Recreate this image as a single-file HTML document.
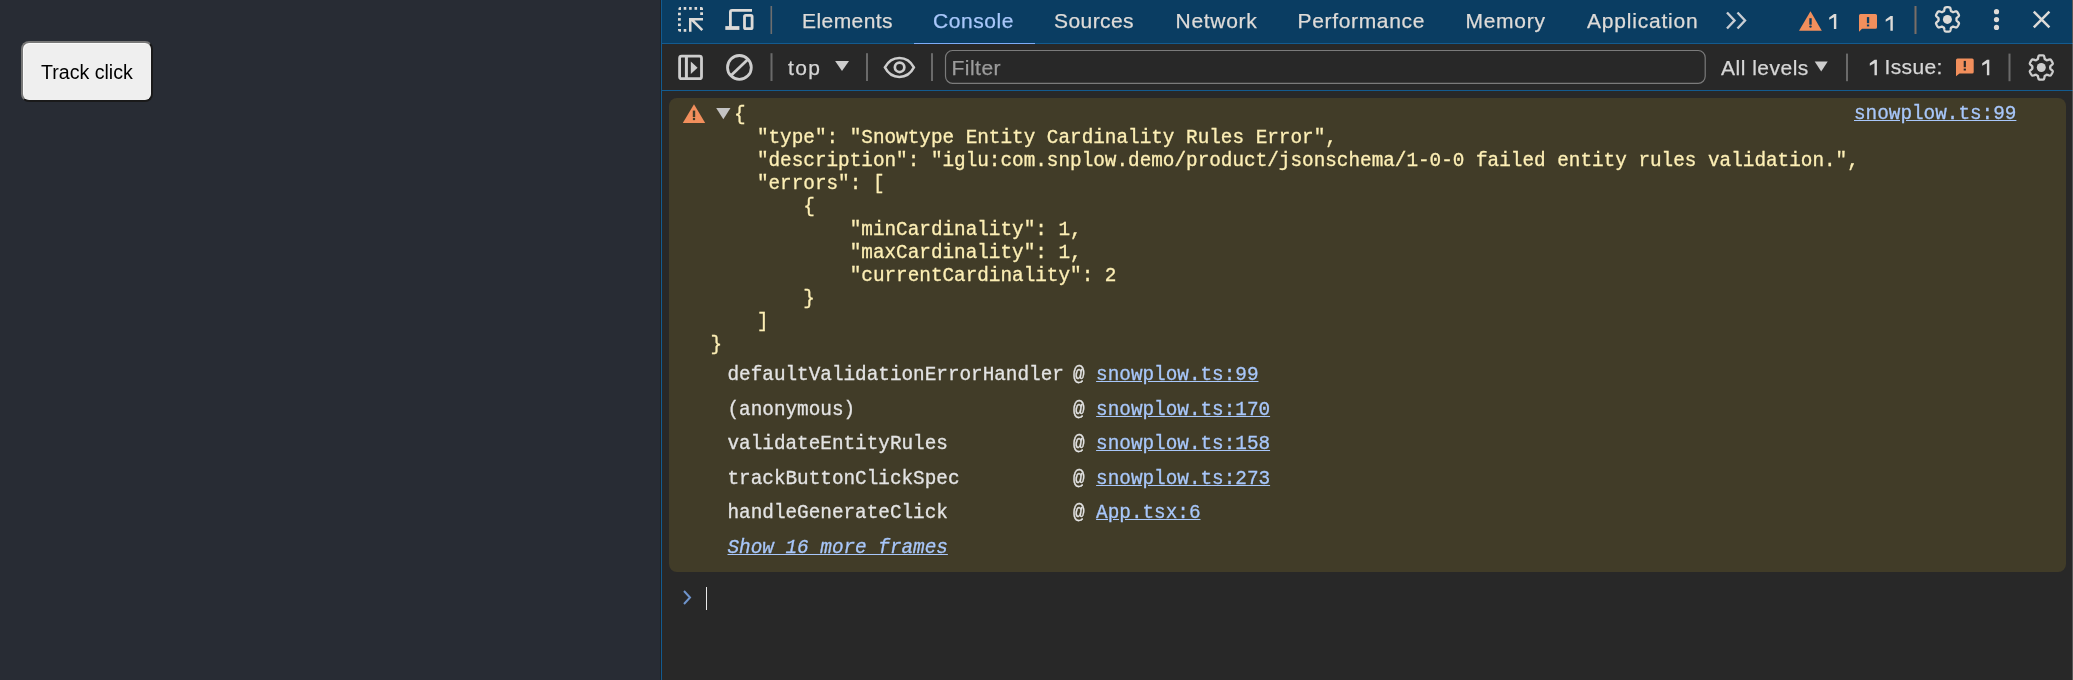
<!DOCTYPE html>
<html><head><meta charset="utf-8">
<style>
html,body{margin:0;padding:0;}
body{will-change:transform;width:2073px;height:680px;position:relative;overflow:hidden;background:#282c34;font-family:"Liberation Sans",sans-serif;}
.a{position:absolute;}
#btn{left:21px;top:41px;box-sizing:border-box;width:132px;height:61px;background:#efefef;border:2px solid #787878;border-right-color:#1a1a1a;border-bottom-color:#1a1a1a;border-radius:8px;box-shadow:inset 1px 1px 0 #fafafa;}
#btntxt{left:41px;top:60px;font-size:19.6px;color:#000;white-space:nowrap;line-height:24px;}
#dt{left:660px;top:0;width:1413px;height:680px;background:#282828;}
#tabbar{left:662px;top:0;width:1410px;height:43px;background:#0a3d62;}
.bl{background:#135b90;}
.tab{-webkit-text-stroke:0.25px currentColor;top:8px;font-size:21px;line-height:26px;color:#dedbd8;white-space:nowrap;}
.sep{width:2px;background:#6a6a6a;}
.tb{-webkit-text-stroke:0.25px currentColor;font-size:21px;line-height:26px;color:#e3e3e3;white-space:nowrap;}
.mono{-webkit-text-stroke:0.3px currentColor;font-family:"Liberation Mono",monospace;font-size:19.34px;white-space:pre;line-height:23px;}
.w{color:#fdefb5;}
.s{color:#e3e3e3;}
.lk{color:#a8c7fa;text-decoration:underline;text-underline-offset:1px;}
</style></head><body>
<div class="a" id="btn"></div>
<div class="a" id="btntxt">Track click</div>

<div class="a" id="dt"></div>
<div class="a" style="left:660px;top:0;width:1px;height:680px;background:#1f2226"></div>
<div class="a bl" style="left:661px;top:0;width:1px;height:680px"></div>

<div class="a" id="tabbar"></div>
<div class="a bl" style="left:661px;top:43px;width:1412px;height:1px"></div>
<div class="a bl" style="left:661px;top:90px;width:1412px;height:1px"></div>

<!-- tabs -->
<div class="a tab" style="left:802px;letter-spacing:0.43px">Elements</div>
<div class="a tab" style="left:933px;color:#a8c7fa;letter-spacing:0.58px">Console</div>
<div class="a" style="left:914px;top:43px;width:121px;height:1px;background:#7cacf8"></div>
<div class="a tab" style="left:1054px;letter-spacing:0.42px">Sources</div>
<div class="a tab" style="left:1175.5px;letter-spacing:0.72px">Network</div>
<div class="a tab" style="left:1297.5px;letter-spacing:0.66px">Performance</div>
<div class="a tab" style="left:1465.5px;letter-spacing:0.72px">Memory</div>
<div class="a tab" style="left:1587px;letter-spacing:0.8px">Application</div>

<!-- console message -->
<div class="a" style="left:669px;top:98px;width:1397px;height:474px;background:#413c28;border-radius:8px"></div>
<div class="a mono w" style="left:734px;top:104px">{</div>
<div class="a mono w" style="left:710.5px;top:127px">    "type": "Snowtype Entity Cardinality Rules Error",
    "description": "iglu:com.snplow.demo/product/jsonschema/1-0-0 failed entity rules validation.",
    "errors": [
        {
            "minCardinality": 1,
            "maxCardinality": 1,
            "currentCardinality": 2
        }
    ]
}</div>

<!-- stack -->
<div class="a mono s" style="left:727.5px;top:358px;line-height:34.5px">defaultValidationErrorHandler
(anonymous)
validateEntityRules
trackButtonClickSpec
handleGenerateClick
<span class="lk" style="font-style:italic">Show 16 more frames</span></div>
<div class="a mono s" style="left:1072.9px;top:358px;line-height:34.5px">@ <span class="lk">snowplow.ts:99</span>
@ <span class="lk">snowplow.ts:170</span>
@ <span class="lk">snowplow.ts:158</span>
@ <span class="lk">snowplow.ts:273</span>
@ <span class="lk">App.tsx:6</span></div>
<div class="a mono lk" style="left:1854px;top:103px">snowplow.ts:99</div>

<!-- prompt -->
<svg class="a" style="left:680px;top:588px" width="16" height="20" viewBox="0 0 16 20"><path d="M4 3 L10 9.5 L4 16" fill="none" stroke="#6f94cc" stroke-width="2"/></svg>
<div class="a" style="left:706px;top:587px;width:1.3px;height:23.3px;background:#e8e8e8"></div>

<!-- icons overlay -->
<svg class="a" style="left:0;top:0" width="2073" height="95" viewBox="0 0 2073 95">
 <g fill="#dddbd8">
  <!-- inspect dots -->
  <path d="M678.5 10 L678.5 8.5 Q678.5 7 680 7 L681 7 L681 10 Z"/>
  <rect x="683.7" y="7" width="2.6" height="2.8"/>
  <rect x="689.1" y="7" width="2.6" height="2.8"/>
  <rect x="694.5" y="7" width="2.6" height="2.8"/>
  <path d="M700 7 L701.5 7 Q703 7 703 8.5 L703 10 L700 10 Z"/>
  <rect x="678" y="12.7" width="2.8" height="2.6"/>
  <rect x="678" y="18.1" width="2.8" height="2.6"/>
  <rect x="678" y="23.5" width="2.8" height="2.6"/>
  <path d="M678 29 L681 29 L681 31.8 L680 31.8 Q678 31.8 678 30 Z"/>
  <rect x="683.7" y="29" width="2.6" height="2.8"/>
  <rect x="700.2" y="12.3" width="2.8" height="2.7"/>
  <!-- arrow -->
  <path d="M689 18 L703 18 L703 20.5 L694.5 20.5 L703.2 29.2 L701.4 31 L691.5 21.3 L691.5 31.8 L689 31.8 Z"/>
 </g>
 <!-- device icon -->
 <g fill="none" stroke="#dddbd8" stroke-width="2.8">
  <path d="M752 10.3 L732 10.3 Q730.4 10.3 730.4 12 L730.4 27"/>
  <rect x="744.5" y="15.4" width="7.6" height="13.2" rx="1.2"/>
 </g>
 <rect x="725.3" y="26.1" width="14.1" height="3.8" fill="#dddbd8"/>
 <rect x="770.5" y="6" width="1.6" height="28" fill="#6e6e6e"/>
 <!-- chevrons -->
 <path d="M1727 12.5 L1734.5 20.5 L1727 28.5 M1737.5 12.5 L1745 20.5 L1737.5 28.5" fill="none" stroke="#c9cdd3" stroke-width="2.4"/>
 <!-- warning triangle -->
 <path d="M1810.5 11.3 L1821.8 30.8 L1799 30.8 Z" fill="#f28f5c"/>
 <rect x="1809.3" y="18.2" width="2.4" height="6.5" fill="#0a3d62"/>
 <circle cx="1810.5" cy="26.6" r="1.2" fill="#0a3d62"/>
 <!-- issue bubble -->
 <path d="M1860.5 14.1 L1875.5 14.1 Q1877 14.1 1877 15.6 L1877 27.3 Q1877 28.8 1875.5 28.8 L1862 28.8 L1859 31.8 L1859 15.6 Q1859 14.1 1860.5 14.1 Z" fill="#f28f5c"/>
 <rect x="1866.9" y="17.1" width="2.3" height="6.1" fill="#0a3d62"/>
 <rect x="1866.9" y="24.5" width="2.3" height="1.9" fill="#0a3d62"/>
 <rect x="1914.5" y="6" width="2" height="28" fill="#7a6e66"/>
 <!-- gear -->
 <path d="M1956.50 19.40 L1956.50 19.16 L1956.49 18.93 L1956.47 18.69 L1956.45 18.46 L1956.51 18.21 L1956.73 17.94 L1957.09 17.62 L1957.52 17.27 L1957.98 16.88 L1958.41 16.48 L1958.75 16.07 L1958.95 15.68 L1958.99 15.33 L1958.89 15.03 L1958.77 14.73 L1958.65 14.44 L1958.51 14.15 L1958.37 13.86 L1958.22 13.58 L1958.07 13.30 L1957.90 13.03 L1957.73 12.76 L1957.55 12.49 L1957.37 12.23 L1957.18 11.97 L1956.98 11.72 L1956.77 11.48 L1956.45 11.34 L1956.01 11.32 L1955.49 11.41 L1954.92 11.58 L1954.35 11.79 L1953.83 11.99 L1953.38 12.13 L1953.03 12.19 L1952.79 12.12 L1952.60 11.98 L1952.40 11.85 L1952.20 11.73 L1952.00 11.61 L1951.79 11.49 L1951.59 11.38 L1951.37 11.28 L1951.16 11.18 L1950.98 11.00 L1950.85 10.67 L1950.75 10.21 L1950.67 9.66 L1950.56 9.06 L1950.42 8.49 L1950.24 7.99 L1950.00 7.62 L1949.72 7.41 L1949.41 7.35 L1949.09 7.30 L1948.78 7.27 L1948.46 7.24 L1948.14 7.22 L1947.82 7.20 L1947.50 7.20 L1947.18 7.20 L1946.86 7.22 L1946.54 7.24 L1946.22 7.27 L1945.91 7.30 L1945.59 7.35 L1945.28 7.41 L1945.00 7.62 L1944.76 7.99 L1944.58 8.49 L1944.44 9.06 L1944.33 9.66 L1944.25 10.21 L1944.15 10.67 L1944.02 11.00 L1943.84 11.18 L1943.63 11.28 L1943.41 11.38 L1943.21 11.49 L1943.00 11.61 L1942.80 11.73 L1942.60 11.85 L1942.40 11.98 L1942.21 12.12 L1941.97 12.19 L1941.62 12.13 L1941.17 11.99 L1940.65 11.79 L1940.08 11.58 L1939.51 11.41 L1938.99 11.32 L1938.55 11.34 L1938.23 11.48 L1938.02 11.72 L1937.82 11.97 L1937.63 12.23 L1937.45 12.49 L1937.27 12.76 L1937.10 13.03 L1936.93 13.30 L1936.78 13.58 L1936.63 13.86 L1936.49 14.15 L1936.35 14.44 L1936.23 14.73 L1936.11 15.03 L1936.01 15.33 L1936.05 15.68 L1936.25 16.07 L1936.59 16.48 L1937.02 16.88 L1937.48 17.27 L1937.91 17.62 L1938.27 17.94 L1938.49 18.21 L1938.55 18.46 L1938.53 18.69 L1938.51 18.93 L1938.50 19.16 L1938.50 19.40 L1938.50 19.64 L1938.51 19.87 L1938.53 20.11 L1938.55 20.34 L1938.49 20.59 L1938.27 20.86 L1937.91 21.18 L1937.48 21.53 L1937.02 21.92 L1936.59 22.32 L1936.25 22.73 L1936.05 23.12 L1936.01 23.47 L1936.11 23.77 L1936.23 24.07 L1936.35 24.36 L1936.49 24.65 L1936.63 24.94 L1936.78 25.22 L1936.93 25.50 L1937.10 25.77 L1937.27 26.04 L1937.45 26.31 L1937.63 26.57 L1937.82 26.83 L1938.02 27.08 L1938.23 27.32 L1938.55 27.46 L1938.99 27.48 L1939.51 27.39 L1940.08 27.22 L1940.65 27.01 L1941.17 26.81 L1941.62 26.67 L1941.97 26.61 L1942.21 26.68 L1942.40 26.82 L1942.60 26.95 L1942.80 27.07 L1943.00 27.19 L1943.21 27.31 L1943.41 27.42 L1943.63 27.52 L1943.84 27.62 L1944.02 27.80 L1944.15 28.13 L1944.25 28.59 L1944.33 29.14 L1944.44 29.74 L1944.58 30.31 L1944.76 30.81 L1945.00 31.18 L1945.28 31.39 L1945.59 31.45 L1945.91 31.50 L1946.22 31.53 L1946.54 31.56 L1946.86 31.58 L1947.18 31.60 L1947.50 31.60 L1947.82 31.60 L1948.14 31.58 L1948.46 31.56 L1948.78 31.53 L1949.09 31.50 L1949.41 31.45 L1949.72 31.39 L1950.00 31.18 L1950.24 30.81 L1950.42 30.31 L1950.56 29.74 L1950.67 29.14 L1950.75 28.59 L1950.85 28.13 L1950.98 27.80 L1951.16 27.62 L1951.37 27.52 L1951.59 27.42 L1951.79 27.31 L1952.00 27.19 L1952.20 27.07 L1952.40 26.95 L1952.60 26.82 L1952.79 26.68 L1953.03 26.61 L1953.38 26.67 L1953.83 26.81 L1954.35 27.01 L1954.92 27.22 L1955.49 27.39 L1956.01 27.48 L1956.45 27.46 L1956.77 27.32 L1956.98 27.08 L1957.18 26.83 L1957.37 26.57 L1957.55 26.31 L1957.73 26.04 L1957.90 25.77 L1958.07 25.50 L1958.22 25.22 L1958.37 24.94 L1958.51 24.65 L1958.65 24.36 L1958.77 24.07 L1958.89 23.77 L1958.99 23.47 L1958.95 23.12 L1958.75 22.73 L1958.41 22.32 L1957.98 21.92 L1957.52 21.53 L1957.09 21.18 L1956.73 20.86 L1956.51 20.59 L1956.45 20.34 L1956.47 20.11 L1956.49 19.87 L1956.50 19.64 Z" fill="none" stroke="#dddbd8" stroke-width="2.3" stroke-linejoin="round"/>
 <circle cx="1947.4" cy="19.4" r="4.5" fill="#dddbd8"/>
 <!-- kebab -->
 <circle cx="1996.5" cy="11.7" r="2.6" fill="#dddbd8"/>
 <circle cx="1996.5" cy="19.6" r="2.6" fill="#dddbd8"/>
 <circle cx="1996.5" cy="27.4" r="2.6" fill="#dddbd8"/>
 <!-- close -->
 <path d="M2033.8 11.6 L2049.4 27.3 M2049.4 11.6 L2033.8 27.3" stroke="#dddbd8" stroke-width="2.5"/>

 <!-- toolbar 2 -->
 <rect x="679.6" y="56.2" width="21.9" height="22.5" rx="2" fill="none" stroke="#cdcdcd" stroke-width="2.8"/>
 <rect x="684.9" y="56" width="3" height="23" fill="#cdcdcd"/>
 <path d="M690.8 61.5 L697.6 67.7 L690.8 73.9 Z" fill="#cdcdcd"/>
 <circle cx="739.4" cy="67.4" r="11.9" fill="none" stroke="#cdcdcd" stroke-width="2.8"/>
 <path d="M748 59.3 L731 75.5" stroke="#cdcdcd" stroke-width="2.8"/>
 <rect x="770.5" y="53.2" width="2" height="27.8" fill="#6a6a6a"/>
 <path d="M835.1 61 L849 61 L842 71 Z" fill="#cdcdcd"/>
 <rect x="866" y="53.2" width="2" height="27.8" fill="#6a6a6a"/>
 <path d="M884.9 67.4 C888.2 61,893.2 57.9,899.4 57.9 C905.6 57.9,910.6 61,913.9 67.4 C910.6 73.8,905.6 76.9,899.4 76.9 C893.2 76.9,888.2 73.8,884.9 67.4 Z" fill="none" stroke="#cdcdcd" stroke-width="2.5"/>
 <circle cx="899.6" cy="67.3" r="4.75" fill="none" stroke="#cdcdcd" stroke-width="2.7"/>
 <rect x="931" y="53.2" width="2" height="27.8" fill="#6a6a6a"/>
 <rect x="945.5" y="50.5" width="759.7" height="32.8" rx="7" fill="none" stroke="#7b7b7b" stroke-width="1.2"/>
 <path d="M1814.7 61.5 L1827.7 61.5 L1821.2 71.4 Z" fill="#cdcdcd"/>
 <rect x="1846" y="53.6" width="2" height="27.6" fill="#6a6a6a"/>
 <path d="M1957.5 58.4 L1972.2 58.4 Q1973.7 58.4 1973.7 59.9 L1973.7 72 Q1973.7 73.5 1972.2 73.5 L1959.5 73.5 L1956 76.2 L1956 59.9 Q1956 58.4 1957.5 58.4 Z" fill="#f28f5c"/>
 <rect x="1963.7" y="60.9" width="2.2" height="6.3" fill="#282828"/>
 <rect x="1963.7" y="68.6" width="2.2" height="1.9" fill="#282828"/>
 <rect x="2008.5" y="53.6" width="2" height="27.6" fill="#6a6a6a"/>
 <path d="M2050.30 67.50 L2050.30 67.26 L2050.29 67.03 L2050.27 66.79 L2050.25 66.56 L2050.31 66.31 L2050.53 66.04 L2050.89 65.72 L2051.32 65.37 L2051.78 64.98 L2052.21 64.58 L2052.55 64.17 L2052.75 63.78 L2052.79 63.43 L2052.69 63.13 L2052.57 62.83 L2052.45 62.54 L2052.31 62.25 L2052.17 61.96 L2052.02 61.68 L2051.87 61.40 L2051.70 61.13 L2051.53 60.86 L2051.35 60.59 L2051.17 60.33 L2050.98 60.07 L2050.78 59.82 L2050.57 59.58 L2050.25 59.44 L2049.81 59.42 L2049.29 59.51 L2048.72 59.68 L2048.15 59.89 L2047.63 60.09 L2047.18 60.23 L2046.83 60.29 L2046.59 60.22 L2046.40 60.08 L2046.20 59.95 L2046.00 59.83 L2045.80 59.71 L2045.59 59.59 L2045.39 59.48 L2045.17 59.38 L2044.96 59.28 L2044.78 59.10 L2044.65 58.77 L2044.55 58.31 L2044.47 57.76 L2044.36 57.16 L2044.22 56.59 L2044.04 56.09 L2043.80 55.72 L2043.52 55.51 L2043.21 55.45 L2042.89 55.40 L2042.58 55.37 L2042.26 55.34 L2041.94 55.32 L2041.62 55.30 L2041.30 55.30 L2040.98 55.30 L2040.66 55.32 L2040.34 55.34 L2040.02 55.37 L2039.71 55.40 L2039.39 55.45 L2039.08 55.51 L2038.80 55.72 L2038.56 56.09 L2038.38 56.59 L2038.24 57.16 L2038.13 57.76 L2038.05 58.31 L2037.95 58.77 L2037.82 59.10 L2037.64 59.28 L2037.43 59.38 L2037.21 59.48 L2037.01 59.59 L2036.80 59.71 L2036.60 59.83 L2036.40 59.95 L2036.20 60.08 L2036.01 60.22 L2035.77 60.29 L2035.42 60.23 L2034.97 60.09 L2034.45 59.89 L2033.88 59.68 L2033.31 59.51 L2032.79 59.42 L2032.35 59.44 L2032.03 59.58 L2031.82 59.82 L2031.62 60.07 L2031.43 60.33 L2031.25 60.59 L2031.07 60.86 L2030.90 61.13 L2030.73 61.40 L2030.58 61.68 L2030.43 61.96 L2030.29 62.25 L2030.15 62.54 L2030.03 62.83 L2029.91 63.13 L2029.81 63.43 L2029.85 63.78 L2030.05 64.17 L2030.39 64.58 L2030.82 64.98 L2031.28 65.37 L2031.71 65.72 L2032.07 66.04 L2032.29 66.31 L2032.35 66.56 L2032.33 66.79 L2032.31 67.03 L2032.30 67.26 L2032.30 67.50 L2032.30 67.74 L2032.31 67.97 L2032.33 68.21 L2032.35 68.44 L2032.29 68.69 L2032.07 68.96 L2031.71 69.28 L2031.28 69.63 L2030.82 70.02 L2030.39 70.42 L2030.05 70.83 L2029.85 71.22 L2029.81 71.57 L2029.91 71.87 L2030.03 72.17 L2030.15 72.46 L2030.29 72.75 L2030.43 73.04 L2030.58 73.32 L2030.73 73.60 L2030.90 73.87 L2031.07 74.14 L2031.25 74.41 L2031.43 74.67 L2031.62 74.93 L2031.82 75.18 L2032.03 75.42 L2032.35 75.56 L2032.79 75.58 L2033.31 75.49 L2033.88 75.32 L2034.45 75.11 L2034.97 74.91 L2035.42 74.77 L2035.77 74.71 L2036.01 74.78 L2036.20 74.92 L2036.40 75.05 L2036.60 75.17 L2036.80 75.29 L2037.01 75.41 L2037.21 75.52 L2037.43 75.62 L2037.64 75.72 L2037.82 75.90 L2037.95 76.23 L2038.05 76.69 L2038.13 77.24 L2038.24 77.84 L2038.38 78.41 L2038.56 78.91 L2038.80 79.28 L2039.08 79.49 L2039.39 79.55 L2039.71 79.60 L2040.02 79.63 L2040.34 79.66 L2040.66 79.68 L2040.98 79.70 L2041.30 79.70 L2041.62 79.70 L2041.94 79.68 L2042.26 79.66 L2042.58 79.63 L2042.89 79.60 L2043.21 79.55 L2043.52 79.49 L2043.80 79.28 L2044.04 78.91 L2044.22 78.41 L2044.36 77.84 L2044.47 77.24 L2044.55 76.69 L2044.65 76.23 L2044.78 75.90 L2044.96 75.72 L2045.17 75.62 L2045.39 75.52 L2045.59 75.41 L2045.80 75.29 L2046.00 75.17 L2046.20 75.05 L2046.40 74.92 L2046.59 74.78 L2046.83 74.71 L2047.18 74.77 L2047.63 74.91 L2048.15 75.11 L2048.72 75.32 L2049.29 75.49 L2049.81 75.58 L2050.25 75.56 L2050.57 75.42 L2050.78 75.18 L2050.98 74.93 L2051.17 74.67 L2051.35 74.41 L2051.53 74.14 L2051.70 73.87 L2051.87 73.60 L2052.02 73.32 L2052.17 73.04 L2052.31 72.75 L2052.45 72.46 L2052.57 72.17 L2052.69 71.87 L2052.79 71.57 L2052.75 71.22 L2052.55 70.83 L2052.21 70.42 L2051.78 70.02 L2051.32 69.63 L2050.89 69.28 L2050.53 68.96 L2050.31 68.69 L2050.25 68.44 L2050.27 68.21 L2050.29 67.97 L2050.30 67.74 Z" fill="none" stroke="#cdcdcd" stroke-width="2.3" stroke-linejoin="round"/>
 <circle cx="2041.3" cy="67.5" r="4.5" fill="#cdcdcd"/>
</svg>


<div class="a tb" style="left:788px;top:55px;color:#d6d6d6;letter-spacing:1.4px">top</div>
<div class="a tb" style="left:951.4px;top:55.3px;color:#9c9c9c;letter-spacing:0.5px">Filter</div>
<div class="a tb" style="left:1721px;top:55px;color:#d6d6d6;letter-spacing:0.5px">All levels</div>
<div class="a tb" style="left:1884.5px;top:54px;color:#d6d6d6;letter-spacing:0.35px">Issue:</div>
<svg class="a" style="left:0;top:0" width="2073" height="95" viewBox="0 0 2073 95"><path d="M1836.3 13.9 V29 H1833.9 V17.3 L1829.2 19.8 V17.4 L1834.0 13.9 Z" fill="#dddbd8"/><path d="M1892.8 15.9 V30.8 H1890.4 V19.3 L1885.7 21.8 V19.4 L1890.5 15.9 Z" fill="#dddbd8"/><path d="M1876.9 59.8 V75.3 H1874.5 V63.2 L1869.8 65.7 V63.3 L1874.6 59.8 Z" fill="#d6d6d6"/><path d="M1989.3 59.8 V75.3 H1986.9 V63.2 L1982.2 65.7 V63.3 L1987.0 59.8 Z" fill="#d6d6d6"/></svg>

<svg class="a" style="left:670px;top:98px" width="70" height="30" viewBox="670 98 70 30">
 <path d="M694 104.2 L705.2 123 L682.8 123 Z" fill="#f28f5c"/>
 <rect x="692.8" y="110.6" width="2.4" height="6.4" fill="#413c28"/>
 <circle cx="694" cy="119.1" r="1.25" fill="#413c28"/>
 <path d="M716.2 108 L730.5 108 L723.35 119.3 Z" fill="#c4c4c4"/>
</svg>
<div class="a" style="left:2072px;top:0;width:1px;height:680px;background:rgba(160,160,160,0.4)"></div>
</body></html>
